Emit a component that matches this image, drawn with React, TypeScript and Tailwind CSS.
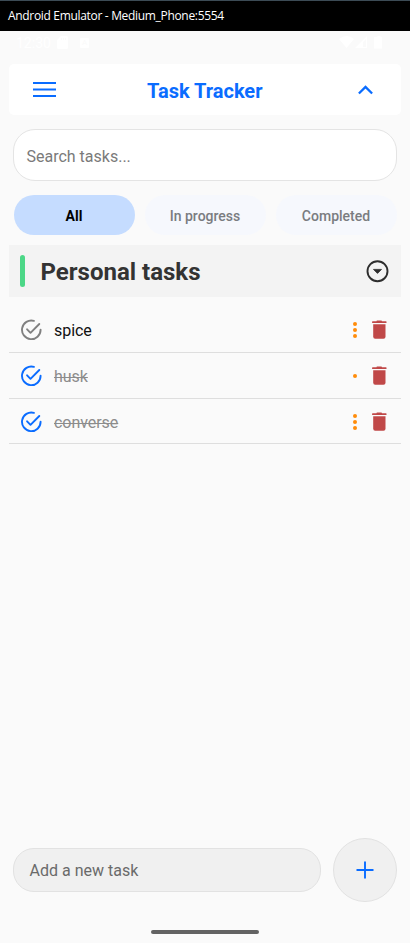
import React from "react";

type Task = { name: string; done: boolean; dots: number };

const tasks: Task[] = [
  { name: "spice", done: false, dots: 3 },
  { name: "husk", done: true, dots: 1 },
  { name: "converse", done: true, dots: 3 },
];

function CheckCircle({ className }: { className: string }) {
  return (
    <svg className={className} width="22" height="22" viewBox="0 0 22 22" fill="none" stroke="currentColor" strokeWidth="1.9" strokeLinecap="round" strokeLinejoin="round">
      <path d="M13.9 1.900A9.300 9.300 0 1 0 20.600 10.800" />
      <path d="M7.100 10.300l3.400 3.500L19.300 5" />
    </svg>
  );
}

function Trash() {
  return (
    <svg width="16" height="20" viewBox="0 0 16 20" fill="#c04848">
      <path d="M5.500 .9Q5.500 .4 6.100 .4h4.200q.6 0 .6 .5v.4H15q.5 0 .5.500v1.300H1.100V1.800q0-.5.500-.5H5.500z" />
      <path d="M2.200 4.200h12.300v12.600q0 2-2 2H4.200q-2 0-2-2z" />
    </svg>
  );
}

function TaskRow({ task }: { task: Task }) {
  return (
    <div className="flex h-[45.700px] items-center border-b border-[#dedede] pl-[11px] pr-[14.500px] pt-[1px]">
      <CheckCircle className={task.done ? "text-[#0a6cff]" : "text-[#808080]"} />
      <span className={"ml-[12px] flex-1 pt-[2px] text-[16px] leading-[20px] tracking-[-0.05px] " + (task.done ? "text-[#8c8c8c] line-through decoration-1" : "text-[#111]")}>
        {task.name}
      </span>
      <div className="mr-[14px] flex flex-col gap-[2px]">
        {Array.from({ length: task.dots }, (_, i) => (
          <span key={i} className="size-[4px] rounded-full bg-[#ff8c0a]" />
        ))}
      </div>
      <Trash />
    </div>
  );
}

export default function App() {
  return (
    <div className="flex h-[943px] w-[410px] flex-col overflow-hidden bg-[#fafafa] font-[Roboto,sans-serif]">
      <div className="flex h-[31px] shrink-0 items-center border-t border-[#3c4b55] bg-black pl-2 font-['Open_Sans',sans-serif] text-[12px] tracking-[-0.32px] text-white">
        Android Emulator - Medium_Phone:5554
      </div>

      <div className="flex h-[33px] shrink-0 items-start pl-[16px] pr-[27px] pt-[4px] text-white">
        <span className="w-[41px] text-[14px] leading-[16px]">12:30</span>
        <svg className="mt-px" width="11" height="13" viewBox="0 0 11 13" fill="currentColor">
          <path fillRule="evenodd" d="M4 0h5.5Q11 0 11 1.5v10Q11 13 9.500 13h-8Q0 13 0 11.500V4zM4 2v2h1V2zm2 0v2h1V2zm2 0v2h1V2z" />
        </svg>
        <span className="ml-[12px] mt-[3px] flex h-[10px] w-[9px] items-center justify-center rounded-[1px] bg-white text-[8px] leading-none text-[#fafafa]">A</span>
        <svg className="ml-auto mt-px" width="44" height="13" viewBox="0 0 44 13" fill="currentColor">
          <path d="M0 3Q8 -3 15 3L7.500 12z" />
          <path fillRule="evenodd" d="M16 12L28 0v12zm8-1h3V3l-3 3z" />
          <path d="M37 1h1.500V0h3v1H43v11.500h-8V1z" />
        </svg>
      </div>

      <header className="ml-[9px] flex h-[51px] w-[392px] shrink-0 items-center rounded-[5px] bg-white pl-[24px] pr-[28px] text-[#0a6cff]">
        <svg width="23" height="17" viewBox="0 0 23 17" stroke="currentColor" strokeWidth="2">
          <path d="M0 2h23M0 8.500h23M0 15h23" />
        </svg>
        <h1 className="ml-[91px] flex-1 pt-[2px] text-[20px] font-bold leading-6">Task Tracker</h1>
        <svg width="15" height="10" viewBox="0 0 15 10" fill="none" stroke="currentColor" strokeWidth="2.300">
          <path d="M.9 8.500l6.600-6.600 6.600 6.600" />
        </svg>
      </header>

      <div className="ml-[13px] mt-[14px] flex h-[52px] w-[384px] shrink-0 items-center rounded-[22px] border border-[#e4e4e4] bg-white pl-[12.500px] pt-[3px] text-[16px] text-[#7a7a7a]">
        Search tasks...
      </div>

      <div className="ml-[13.500px] mt-[14px] flex h-[40px] w-[383px] shrink-0 gap-[10px] text-[14px] font-medium text-[#7a7c80]">
        <button className="flex-1 rounded-full bg-[#c5dcff] pt-[2px] font-bold text-black">All</button>
        <button className="flex-1 rounded-full bg-[#f6f8fd] pt-[2px]">In progress</button>
        <button className="flex-1 rounded-full bg-[#f6f8fd] pt-[2px]">Completed</button>
      </div>

      <div className="ml-[9px] mt-[10px] flex h-[52px] w-[392px] shrink-0 items-center bg-[#f3f3f3] pl-[10.500px] pr-[12.500px]">
        <span className="h-[32px] w-[5.500px] rounded-full bg-[#4cd787]" />
        <h2 className="ml-[15.500px] flex-1 pt-[2px] text-[24px] font-bold leading-7 text-[#333]">Personal tasks</h2>
        <svg width="23" height="23" viewBox="0 0 23 23" fill="none" stroke="#2d2d2d" strokeWidth="1.900">
          <circle cx="11.500" cy="11.200" r="10" />
          <path d="M7.500 9.400h8l-4 4z" fill="#2d2d2d" stroke="#2d2d2d" strokeWidth=".8" strokeLinejoin="round" />
        </svg>
      </div>

      <main className="ml-[9px] mt-[10.300px] w-[392px] flex-1">
        {tasks.map((task) => (
          <TaskRow key={task.name} task={task} />
        ))}
      </main>

      <div className="mb-[28px] ml-[13px] flex shrink-0 items-center gap-[11.500px]">
        <div className="flex h-[44px] w-[308px] items-center rounded-[21px] border border-[#e2e2e2] bg-[#f0f0f0] pl-[15.500px] pt-px text-[16px] text-[#6a6a6a]">
          Add a new task
        </div>
        <button className="flex size-[64px] items-center justify-center rounded-full border border-[#e2e2e2] bg-[#f0f0f0] text-[#0a6cff]">
          <svg width="18" height="18" viewBox="0 0 18 18" stroke="currentColor" strokeWidth="1.900">
            <path d="M.5 9h17M9 .5v17" />
          </svg>
        </button>
      </div>
      <div className="mb-[9px] ml-[151px] h-[4px] w-[108px] shrink-0 rounded-full bg-[#636363]" />
    </div>
  );
}
